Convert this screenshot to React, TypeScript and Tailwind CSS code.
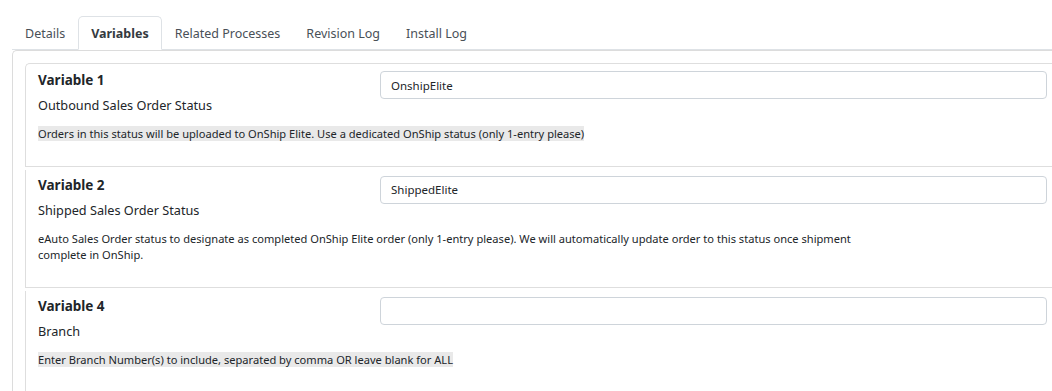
import React from "react";

const tabs = ["Details", "Variables", "Related Processes", "Revision Log", "Install Log"];

const variables = [
    {
        id: 1,
        title: "Variable 1",
        label: "Outbound Sales Order Status",
        value: "OnshipElite",
        help: "Orders in this status will be uploaded to OnShip Elite. Use a dedicated OnShip status (only 1-entry please)",
        highlight: true,
    },
    {
        id: 2,
        title: "Variable 2",
        label: "Shipped Sales Order Status",
        value: "ShippedElite",
        help: "eAuto Sales Order status to designate as completed OnShip Elite order (only 1-entry please). We will automatically update order to this status once shipment complete in OnShip.",
        highlight: false,
    },
    {
        id: 4,
        title: "Variable 4",
        label: "Branch",
        value: "",
        help: "Enter Branch Number(s) to include, separated by comma OR leave blank for ALL",
        highlight: true,
    },
];

export default function App() {
    return (
        <main className="w-[1052px] h-[391px] overflow-hidden bg-white text-[#212529] font-['Noto_Sans',sans-serif]">
            {/* Tabs */}
            <nav className="ml-3 pt-4 flex border-b border-[#dee2e6]">
                {tabs.map((tab) => (
                    <button
                        key={tab}
                        className={
                            tab === "Variables"
                                ? "-mb-px px-3 pt-[7px] pb-[5px] text-[12.5px] leading-[20px] font-bold text-[#343a40] bg-white border border-[#dee2e6] border-b-white rounded-t-[5px]"
                                : "-mb-px px-3 pt-[7px] pb-[5px] text-[12.5px] leading-[20px] text-[#495057] border border-transparent"
                        }
                    >
                        {tab}
                    </button>
                ))}
            </nav>

            {/* Tab pane */}
            <section className="ml-3 w-[1100px] border-l border-t border-[#dcdcdc] rounded-tl-[5px] pt-3 pl-3">
                {variables.map((v, i) => (
                    <div
                        key={v.id}
                        className={
                            i === 0
                                ? "w-[1034px] border-l border-t border-b border-[#dedede] rounded-tl-[5px] pl-3 pr-3 pt-[7px] pb-[23px]"
                                : "w-[1034px] mt-[3px] border-l border-b border-[#dedede] pl-3 pr-3 pt-[6px] pb-[23px]"
                        }
                    >
                        <div className="grid grid-cols-[342px_1fr]">
                            <div>
                                <div className="text-[13.5px] leading-[18px] font-bold text-[#212529]">{v.title}</div>
                                <div className="mt-[6px] text-[12.7px] leading-[21px]">{v.label}</div>
                            </div>
                            <input
                                readOnly
                                value={v.value}
                                className="h-[28px] w-full border border-[#ced4da] rounded-[4px] px-[10px] text-[11.5px] text-[#212529] outline-none"
                            />
                        </div>
                        <p className="mt-[10px] max-w-[840px] text-[11.1px] leading-[16.5px]">
                            {v.highlight ? <span className="bg-[#e9e9e9]">{v.help}</span> : v.help}
                        </p>
                    </div>
                ))}
            </section>
        </main>
    );
}
